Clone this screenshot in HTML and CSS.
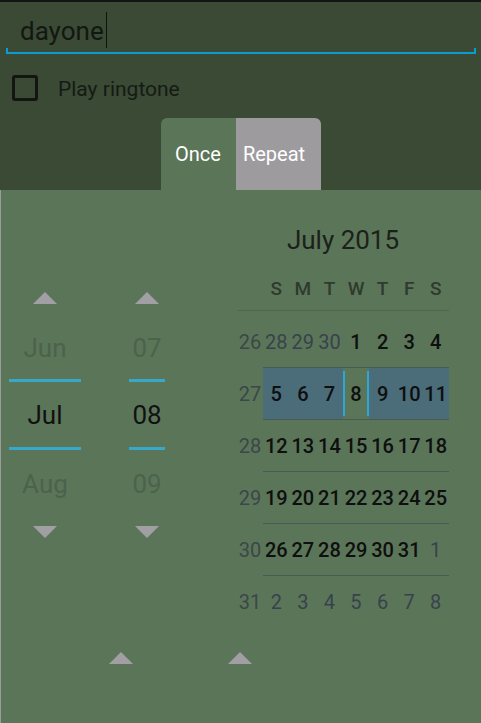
FILE: index.html
```html
<!DOCTYPE html>
<html>
<head>
<meta charset="utf-8">
<link rel="stylesheet" href="styles.css">
</head>
<body>
<div class="app">
  <div class="top">
    <div class="edit">
      <div class="edit-line"><span class="edit-text">dayone</span><span class="cursor"></span></div>
      <div class="underline"></div>
    </div>
    <div class="check"><span class="box"></span><span class="check-label">Play ringtone</span></div>
    <div class="tabs">
      <div class="tab once">Once</div>
      <div class="tab repeat">Repeat</div>
    </div>
  </div>
  <div class="panel">
    <div class="main">
      <div class="pickers">
        <div class="picker month">
          <div class="arrow-box up"><span class="tri-up"></span></div>
          <div class="item prev">Jun</div>
          <div class="divider"></div>
          <div class="item cur">Jul</div>
          <div class="divider"></div>
          <div class="item next">Aug</div>
          <div class="arrow-box down"><span class="tri-down"></span></div>
        </div>
        <div class="picker day">
          <div class="arrow-box up"><span class="tri-up"></span></div>
          <div class="item prev">07</div>
          <div class="divider"></div>
          <div class="item cur">08</div>
          <div class="divider"></div>
          <div class="item next">09</div>
          <div class="arrow-box down"><span class="tri-down"></span></div>
        </div>
      </div>
      <div class="cal">
        <div class="cal-title">July 2015</div>
        <div class="cal-head">
          <span></span><span>S</span><span>M</span><span>T</span><span>W</span><span>T</span><span>F</span><span>S</span>
        </div>
        <div class="weeks">
          <div class="week">
            <div class="wk">26</div>
            <div class="days">
              <div class="d other">28</div><div class="d other">29</div><div class="d other">30</div><div class="d">1</div><div class="d">2</div><div class="d">3</div><div class="d">4</div>
            </div>
          </div>
          <div class="week sel">
            <div class="wk">27</div>
            <div class="days">
              <div class="d">5</div><div class="d">6</div><div class="d">7</div><div class="d today"><span>8</span></div><div class="d">9</div><div class="d">10</div><div class="d">11</div>
            </div>
          </div>
          <div class="week">
            <div class="wk">28</div>
            <div class="days">
              <div class="d">12</div><div class="d">13</div><div class="d">14</div><div class="d">15</div><div class="d">16</div><div class="d">17</div><div class="d">18</div>
            </div>
          </div>
          <div class="week">
            <div class="wk">29</div>
            <div class="days">
              <div class="d">19</div><div class="d">20</div><div class="d">21</div><div class="d">22</div><div class="d">23</div><div class="d">24</div><div class="d">25</div>
            </div>
          </div>
          <div class="week">
            <div class="wk">30</div>
            <div class="days">
              <div class="d">26</div><div class="d">27</div><div class="d">28</div><div class="d">29</div><div class="d">30</div><div class="d">31</div><div class="d other">1</div>
            </div>
          </div>
          <div class="week">
            <div class="wk">31</div>
            <div class="days">
              <div class="d other">2</div><div class="d other">3</div><div class="d other">4</div><div class="d other">5</div><div class="d other">6</div><div class="d other">7</div><div class="d other">8</div>
            </div>
          </div>
        </div>
      </div>
    </div>
    <div class="time-arrows">
      <span class="tri-up"></span>
      <span class="tri-up"></span>
    </div>
  </div>
</div>
</body>
</html>
```
FILE: styles.css
```css
* { box-sizing: border-box; }
html, body { margin: 0; padding: 0; }
body {
  background: #3a4a34;
  font-family: Roboto, "Noto Sans", "Liberation Sans", sans-serif;
  width: 481px;
  height: 723px;
  overflow: hidden;
}
.app { display: flex; flex-direction: column; height: 723px; }

.top { border-top: 2px solid #141414; display: flex; flex-direction: column; }
.edit { margin: 0 5px 0 6px; padding-top: 14px; }
.edit-line { display: flex; align-items: flex-start; padding-left: 14px; height: 30px; }
.edit-text { font-size: 26px; line-height: 30px; color: #131713; }
.cursor { width: 1px; height: 36px; margin-top: -4px; margin-left: 2px; background: #111; }
.underline { margin-top: 2px; height: 6px; border: 2px solid #0b9bd0; border-top: none; }

.check { display: flex; align-items: center; margin-top: 21px; padding-left: 12px; height: 26px; }
.box { width: 26px; height: 26px; border: 3px solid #121512; border-radius: 3px; }
.check-label { margin-left: 20px; font-size: 21px; line-height: 26px; padding-top: 2px; color: #151a15; }

.tabs { margin-top: 17px; display: flex; justify-content: center; height: 72px; }
.tab { display: flex; align-items: center; justify-content: center; font-size: 20px; color: #fff; }
.once { width: 75px; background: #5b7559; border-top-left-radius: 6px; }
.repeat { width: 85px; background: #9e9b9f; border-top-right-radius: 6px; padding-right: 8px; }

.panel { flex: 1; background: #5b7559; border-left: 1px solid #9c9c9c; }
.main { display: flex; }

.pickers { width: 236px; display: flex; padding: 90px 0 0 8px; gap: 48px; }
.picker { display: flex; flex-direction: column; }
.month { width: 72px; }
.day { width: 36px; }
.arrow-box { display: flex; justify-content: center; align-items: center; }
.arrow-box.up { height: 36px; }
.arrow-box.down { height: 28px; }
.tri-up {
  display: block; width: 0; height: 0;
  border-left: 12px solid transparent; border-right: 12px solid transparent;
  border-bottom: 12px solid #a29fa4;
}
.tri-down {
  display: block; width: 0; height: 0;
  border-left: 12px solid transparent; border-right: 12px solid transparent;
  border-top: 12px solid #a29fa4;
}
.item { display: flex; align-items: center; justify-content: center; font-size: 26px; color: #4d624b; }
.item.prev { height: 63px; }
.item.cur { height: 65px; color: #111; }
.item.next { height: 68px; }
.divider { height: 3px; background: #37a7ca; }

.cal { width: 212px; padding-top: 32px; }
.cal-title { text-align: center; font-size: 26px; line-height: 36px; color: #1b211a; }
.cal-head {
  display: grid; grid-template-columns: 26px repeat(7, 1fr);
  height: 45px; margin-top: 8px; align-items: center; text-align: center;
  border-bottom: 1px solid #51684f;
  font-size: 19px; font-weight: 500; color: #2e3b2d;
}
.weeks { margin-top: 5px; }
.week { display: flex; height: 52px; }
.wk { width: 26px; display: flex; align-items: center; justify-content: center; font-size: 20px; color: #3b4748; }
.days { flex: 1; display: grid; grid-template-columns: repeat(7, 1fr); border-bottom: 1px solid #4a5955; }
.week:last-child .days { border-bottom: none; }
.d { display: flex; align-items: center; justify-content: center; font-size: 20px; font-weight: 500; color: #0e0f0e; }
.d.other { font-weight: 400; color: #39424c; }
.week.sel .days { background: #4b6c79; }
.d.today { background: #5b7559; padding: 3px 0; align-items: stretch; }
.d.today span {
  flex: 1; display: flex; align-items: center; justify-content: center;
  border-left: 2px solid #2ea6d6; border-right: 2px solid #2ea6d6;
}

.time-arrows { display: flex; padding: 24px 0 0 108px; gap: 95px; }
```
